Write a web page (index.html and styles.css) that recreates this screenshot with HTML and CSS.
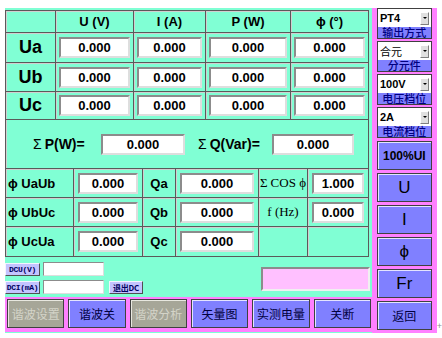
FILE: index.html
```html
<!DOCTYPE html>
<html><head>
<meta charset="utf-8">
<title>电量测量</title>
<link rel="stylesheet" href="styles.css">
</head><body>
<div class="screen">

<div class="main">

<div class="tbl top">
	<div class="hd"></div>
	<div class="hd">U (V)</div>
	<div class="hd">I (A)</div>
	<div class="hd">P (W)</div>
	<div class="hd">ϕ (°)</div>

	<div class="name">Ua</div>
	<div><span class="val">0.000</span></div>
	<div><span class="val">0.000</span></div>
	<div><span class="val">0.000</span></div>
	<div><span class="val">0.000</span></div>

	<div class="name">Ub</div>
	<div><span class="val">0.000</span></div>
	<div><span class="val">0.000</span></div>
	<div><span class="val">0.000</span></div>
	<div><span class="val">0.000</span></div>

	<div class="name">Uc</div>
	<div><span class="val">0.000</span></div>
	<div><span class="val">0.000</span></div>
	<div><span class="val">0.000</span></div>
	<div><span class="val">0.000</span></div>
</div>

<div class="sum">
	<span class="sum-p"><span class="sig">Σ</span>P(W)=</span>
	<span class="val">0.000</span>
	<span class="sum-q"><span class="sig">Σ</span>Q(Var)=</span>
	<span class="val">0.000</span>
</div>

<div class="tbl low">
	<div class="name2">ϕ UaUb</div>
	<div><span class="val">0.000</span></div>
	<div class="mid">Qa</div>
	<div><span class="val">0.000</span></div>
	<div class="serif"><span class="sig">Σ</span>COS ϕ</div>
	<div><span class="val">1.000</span></div>

	<div class="name2">ϕ UbUc</div>
	<div><span class="val">0.000</span></div>
	<div class="mid">Qb</div>
	<div><span class="val">0.000</span></div>
	<div class="serif">f (Hz)</div>
	<div><span class="val">0.000</span></div>

	<div class="name2">ϕ UcUa</div>
	<div><span class="val">0.000</span></div>
	<div class="mid">Qc</div>
	<div><span class="val">0.000</span></div>
	<div></div>
	<div></div>
</div>

<div class="dc">
	<div class="dc-rows">
		<div class="dc-row"><span class="tag">DCU(V)</span><span class="field"></span></div>
		<div class="dc-row"><span class="tag">DCI(mA)</span><span class="field"></span><span class="tag exit">退出DC</span></div>
	</div>
	<div class="msg"></div>
</div>

<div class="bar">
	<span class="btn off">谐波设置</span>
	<span class="btn">谐波关</span>
	<span class="btn off">谐波分析</span>
	<span class="btn">矢量图</span>
	<span class="btn">实测电量</span>
	<span class="btn">关断</span>
</div>

</div>

<div class="side">
	<div class="combo"><div class="sel">PT4<i class="arrow"></i></div><div class="cap">输出方式</div></div>
	<div class="combo"><div class="sel cn">合元<i class="arrow"></i></div><div class="cap">分元件</div></div>
	<div class="combo"><div class="sel">100V<i class="arrow"></i></div><div class="cap">电压档位</div></div>
	<div class="combo"><div class="sel">2A<i class="arrow"></i></div><div class="cap">电流档位</div></div>
	<span class="btn side-btn pct">100%UI</span>
	<span class="btn side-btn key">U</span>
	<span class="btn side-btn key">I</span>
	<span class="btn side-btn key">ϕ</span>
	<span class="btn side-btn key">Fr</span>
	<span class="btn side-btn">返回</span>
</div>

<span class="cursor">+</span>

</div>
</body></html>
```

FILE: styles.css
```css
* {
	box-sizing: border-box;
}

body {
	margin: 0;
	background: #fff;
	font-family: "Liberation Sans", Arial, "Noto Sans CJK SC", sans-serif;
	color: #000;
}

.screen {
	display: flex;
	padding: 8px 0 0 5px;
}

.main {
	width: 368px;
	padding-top: 2px;
	background: #80ffd4;
	display: flex;
	flex-direction: column;
}

/* grids of cells */

.tbl {
	display: grid;
	width: 364px;
	border-left: 1px solid #5a5a5a;
}

.tbl > div {
	display: flex;
	align-items: center;
	justify-content: center;
	border-right: 1px solid #5a5a5a;
	border-bottom: 1px solid #5a5a5a;
	box-shadow: inset 1px 1px #d0d0d0;
	padding: 0 3px;
}

.top {
	border-top: 1px solid #5a5a5a;
	grid-template-columns: 50px 78px 72px 85px 78px;
	grid-template-rows: 22px 30px 29px 28px;
}

.low {
	grid-template-columns: 68px 69px 33px 83px 49px 61px;
	grid-template-rows: 29px 29px 30px;
}

.low > div {
	padding: 0 4px;
}

.hd {
	font-size: 13px;
	font-weight: bold;
}

.name {
	font-size: 18px;
	font-weight: bold;
}

.tbl > .name2 {
	justify-content: flex-start;
	padding-left: 2px;
	font-size: 13px;
	font-weight: bold;
}

.mid {
	font-size: 13px;
	font-weight: bold;
}

.serif {
	font-family: "Liberation Serif", "Times New Roman", serif;
	font-size: 13px;
	white-space: nowrap;
}

.tbl > .serif {
	padding: 0;
}

.val {
	width: 100%;
	height: 21px;
	display: flex;
	align-items: center;
	justify-content: center;
	background: #fff;
	border: 2px solid;
	border-color: #8c8c8c #dedede #dedede #8c8c8c;
	font-size: 13px;
	font-weight: bold;
}

.sig {
	font-weight: normal;
	margin-right: 3px;
}

/* sum row */

.sum {
	width: 364px;
	height: 49px;
	display: flex;
	align-items: center;
	border-left: 1px solid #5a5a5a;
	border-right: 1px solid #5a5a5a;
	border-bottom: 1px solid #5a5a5a;
	box-shadow: inset 1px 0 #d0d0d0;
	font-size: 14px;
	font-weight: bold;
}

.sum-p {
	width: 95px;
	padding-left: 27px;
}

.sum .val:nth-of-type(2) {
	width: 84px;
}

.sum-q {
	width: 87px;
	padding-left: 13px;
}

.sum .val:nth-of-type(4) {
	width: 82px;
}

/* DC area */

.dc {
	height: 40px;
	display: flex;
	align-items: flex-start;
}

.dc-rows {
	padding-top: 5px;
	display: flex;
	flex-direction: column;
	gap: 4px;
}

.dc-row {
	display: flex;
	align-items: center;
	gap: 3px;
}

.tag {
	width: 35px;
	height: 13px;
	display: flex;
	align-items: center;
	justify-content: center;
	background: #c4c4ff;
	border: 1px solid;
	border-color: #f4f4ff #505050 #505050 #f4f4ff;
	font-family: "Liberation Mono", monospace;
	font-size: 8px;
	font-weight: bold;
	color: #000060;
	white-space: nowrap;
	letter-spacing: -0.3px;
}

.exit {
	width: 34px;
	margin-left: 2px;
	font-family: "Noto Sans CJK SC", sans-serif;
}

.field {
	width: 61px;
	height: 14px;
	background: #fff;
	border: 1px solid;
	border-color: #8c8c8c #dedede #dedede #8c8c8c;
}

.msg {
	width: 109px;
	height: 24px;
	margin: 10px 2px 0 auto;
	background: #ffc0ff;
	border: 2px solid;
	border-color: #8c8c8c #f0f0f0 #f0f0f0 #8c8c8c;
}

/* buttons */

.bar {
	height: 35px;
	display: flex;
	gap: 4px;
	padding: 2px 1px 4px 2px;
	background: #ff80ff;
}

.btn {
	display: flex;
	align-items: center;
	justify-content: center;
	background: #8080ff;
	border: 1px solid #404040;
	box-shadow: inset 1px 1px #e4e4ff;
	font-family: "Noto Sans CJK SC", sans-serif;
	font-size: 12px;
	color: #000040;
}

.bar .btn {
	flex: 1;
}

.btn.off {
	background: #a6a698;
	color: #d4d4c8;
	box-shadow: inset 1px 1px #e8e8e0;
}

/* side panel */

.side {
	width: 65px;
	height: 325px;
	padding: 0 5px 0 5px;
	background: #ff80ff;
	display: flex;
	flex-direction: column;
	gap: 2px;
}

.combo {
	height: 31px;
	display: flex;
	flex-direction: column;
	border: 1px solid #404040;
}

.sel {
	height: 19px;
	display: flex;
	align-items: center;
	padding-left: 2px;
	background: #fff;
	font-size: 11px;
	font-weight: bold;
}

.sel.cn {
	font-family: "Noto Sans CJK SC", sans-serif;
	font-weight: normal;
}

.arrow {
	width: 9px;
	height: 13px;
	margin: 0 2px 0 auto;
	background: #e0e0e0;
	border: 1px solid;
	border-color: #fff #808080 #808080 #fff;
	position: relative;
}

.arrow::after {
	content: "";
	position: absolute;
	left: 2px;
	top: 4px;
	border: 2px solid transparent;
	border-top: 2px solid #000;
	border-bottom: 0;
}

.cap {
	flex: 1;
	display: flex;
	align-items: center;
	justify-content: center;
	background: #8080ff;
	font-family: "Noto Sans CJK SC", sans-serif;
	font-size: 11px;
	font-weight: 500;
	line-height: 1;
	color: #000080;
}

.side-btn {
	height: 29px;
	flex-shrink: 0;
	margin-top: 1px;
}

.pct {
	font-family: "Liberation Sans", Arial, sans-serif;
	font-size: 12px;
	font-weight: bold;
	color: #000;
}

.key {
	font-family: "Liberation Sans", Arial, sans-serif;
	font-size: 17px;
	color: #000;
}

.cursor {
	align-self: flex-end;
	margin-bottom: 2px;
	font-size: 9px;
	color: #909090;
}
```
